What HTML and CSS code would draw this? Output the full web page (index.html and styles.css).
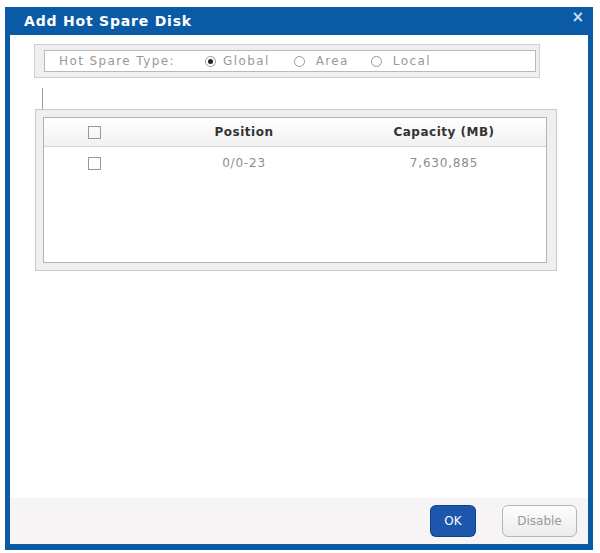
FILE: index.html
```html
<!DOCTYPE html>
<html lang="en">
<head>
    <meta charset="UTF-8">
    <meta name="viewport" content="width=device-width, initial-scale=1.0">
    <link rel="stylesheet" href="styles.css">
    <title>Add Hot Spare Disk</title>
</head>
<body>
    <div class="dialog">
        <div class="dialog-title">
            <span>Add Hot Spare Disk</span>
            <span class="close">&times;</span>
        </div>
        <div class="dialog-body">
            <div class="type-box">
                <div class="type-inner">
                    <span class="type-label">Hot Spare Type:</span>
                    <label class="radio radio-global"><span class="dot checked"></span>Global</label>
                    <label class="radio radio-area"><span class="dot"></span>Area</label>
                    <label class="radio radio-local"><span class="dot"></span>Local</label>
                </div>
            </div>
            <div class="tab-mark"></div>
            <div class="grid-box">
                <div class="grid-inner">
                    <div class="grid-row grid-head">
                        <span class="cell-check"><span class="check"></span></span>
                        <span class="cell-pos">Position</span>
                        <span class="cell-cap">Capacity (MB)</span>
                    </div>
                    <div class="grid-row">
                        <span class="cell-check"><span class="check"></span></span>
                        <span class="cell-pos">0/0-23</span>
                        <span class="cell-cap">7,630,885</span>
                    </div>
                </div>
            </div>
        </div>
        <div class="dialog-footer">
            <button class="btn btn-ok">OK</button>
            <button class="btn btn-plain">Disable</button>
        </div>
    </div>
</body>
</html>
```

FILE: styles.css
```css
body {
    font-family: "DejaVu Sans", Verdana, sans-serif;
    margin: 0;
    padding: 0;
    background-color: #fff;
}

.dialog {
    margin: 7px 0 0 5px;
    width: 588px;
    height: 543px;
    background-color: #0b5aa6;
    padding: 0 5px 6px 5px;
    box-sizing: border-box;
    display: flex;
    flex-direction: column;
}

.dialog-title {
    height: 28px;
    display: flex;
    align-items: center;
    justify-content: space-between;
    color: #fff;
    font-weight: bold;
    font-size: 14px;
    letter-spacing: 0.8px;
    padding: 0 4px 0 14px;
}

.close {
    font-size: 15px;
    color: #cfe0f2;
    margin-top: -8px;
    letter-spacing: 0;
}

.dialog-body {
    flex: 1;
    background-color: #fff;
    padding: 9px 0 0 24px;
}

.type-box {
    width: 506px;
    height: 34px;
    background-color: #efefef;
    border: 1px solid #cfcfcf;
    box-sizing: border-box;
    padding: 5px 3px 5px 9px;
}

.type-inner {
    height: 100%;
    background-color: #fff;
    border: 1px solid #b9b9b9;
    box-sizing: border-box;
    display: flex;
    align-items: center;
    font-size: 12px;
    letter-spacing: 1.4px;
    color: #999;
    padding-left: 14px;
}

.type-label {
    margin-right: 30px;
}

.radio {
    display: flex;
    align-items: center;
}

.radio-global {
    margin-right: 24px;
}

.radio-global .dot {
    margin-right: 7px;
}

.radio-area {
    margin-right: 22px;
}

.radio-area .dot,
.radio-local .dot {
    margin-right: 11px;
}

.dot {
    width: 11px;
    height: 11px;
    border: 1px solid #9a9a9a;
    border-radius: 50%;
    box-sizing: border-box;
    position: relative;
    flex-shrink: 0;
}

.dot.checked::after {
    content: "";
    position: absolute;
    left: 2px;
    top: 2px;
    width: 5px;
    height: 5px;
    border-radius: 50%;
    background-color: #222;
}

.tab-mark {
    width: 1px;
    height: 21px;
    background-color: #9c9c9c;
    margin: 10px 0 0 8px;
}

.grid-box {
    width: 522px;
    height: 162px;
    margin-left: 1px;
    background-color: #efefef;
    border: 1px solid #c9c9c9;
    box-sizing: border-box;
    padding: 7px 9px 7px 7px;
}

.grid-inner {
    height: 100%;
    background-color: #fff;
    border: 1px solid #b3b3b3;
    box-sizing: border-box;
}

.grid-row {
    display: flex;
    align-items: center;
    height: 32px;
    font-size: 12px;
    letter-spacing: 0.8px;
    color: #8c8c8c;
}

.grid-head {
    height: 28px;
    background: linear-gradient(#ffffff, #f1f1f1);
    border-bottom: 1px solid #d6d6d6;
    font-weight: bold;
    letter-spacing: 0.5px;
    color: #333;
}

.cell-check {
    width: 100px;
    display: flex;
    justify-content: center;
}

.check {
    width: 13px;
    height: 13px;
    border: 1px solid #999;
    box-sizing: border-box;
}

.cell-pos {
    width: 200px;
    text-align: center;
}

.cell-cap {
    width: 200px;
    text-align: center;
}

.dialog-footer {
    height: 46px;
    background-color: #f6f4f4;
    display: flex;
    align-items: center;
    justify-content: flex-end;
    padding-right: 11px;
}

.btn {
    font-family: "DejaVu Sans", Verdana, sans-serif;
    font-size: 12px;
    height: 32px;
    border-radius: 6px;
    cursor: pointer;
}

.btn-ok {
    width: 46px;
    background-color: #1d56ad;
    color: #fff;
    border: 1px dotted #0c2a55;
    margin-right: 26px;
}

.btn-plain {
    width: 75px;
    background: linear-gradient(#fdfdfd, #ececec);
    color: #999;
    border: 1px solid #b5b5b5;
}
```
